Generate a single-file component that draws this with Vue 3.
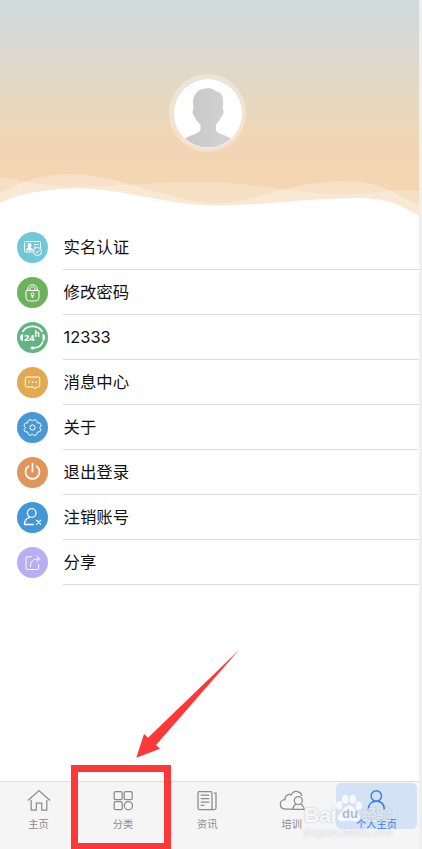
<template>
  <div class="page">
    <div class="screen">
      <header class="hero">
        <div class="avatar">
          <svg viewBox="0 0 68 69">
            <defs>
              <linearGradient id="person" x1="0" x2="1" y1="0" y2="0">
                <stop offset="0" stop-color="#c7c7c7" />
                <stop offset="1" stop-color="#d3d3d3" />
              </linearGradient>
            </defs>
            <path
              fill="url(#person)"
              d="M34 9.300C38.500 9.300 40.500 11 42 12.200C47 13 49.500 17 49.200 23.500L48.800 30.500C50.300 31.500 49.500 36.500 47.500 37.500C46 41 43.500 43.500 42 45.500V50.500C42 55 51 55.500 57 59.500A34 34 0 0 1 11 59.500C17 55.500 26.500 54.500 26.500 50.500V45.500C24.500 43.500 22 41 20.500 37.500C18.500 36.500 17.800 31.500 19.500 30.500L19 23.500C19 14.500 25 9.300 34 9.300Z"
            />
          </svg>
        </div>
        <svg class="waves" viewBox="0 0 419 60" preserveAspectRatio="none">
          <path fill="#fff" fill-opacity=".24" d="M0 12C25 16 45 21.500 75 21.500C125 21.500 150 17 200 17C255 17 300 29.500 345 29.500C375 29 385 24 419 26V60H0Z" />
          <path fill="#fff" fill-opacity=".28" d="M0 28C24 16 42 9 70 9C120 9 170 38 218 38C255 38 290 16 345 16C380 16 397 29 419 41V60H0Z" />
          <path fill="#fff" d="M0 38C20 28 48 23.500 80 23.500C125 23.500 165 40.500 218 40.500C260 40.500 310 33 360 33C388 33 404 42 419 51V60H0Z" />
        </svg>
      </header>

      <ul class="menu">
        <li v-for="item in items" :key="item.icon" class="row">
          <span class="badge" :class="item.icon">
            <svg viewBox="0 0 31 31">
              <g v-if="item.icon === 'identity'">
                <path d="M17 20H8.500Q7.500 20 7.500 19V10.500Q7.500 9.500 8.500 9.500H22.500Q23.500 9.500 23.500 10.500V16M17 12.500H21.500M17 15H19" />
                <path class="solid" d="M12.500 11C15 11 15 14.500 13.500 15.500L16 17V18.500H9V17L11.500 15.500C10 14.500 10 11 12.500 11Z" />
                <circle class="check" cx="20.500" cy="19.500" r="4" />
                <path d="M18.500 19.500L20 21L22.500 18" />
              </g>
              <g v-else-if="item.icon === 'password'">
                <path d="M9 13.500H22V20.500Q22 24 18.500 24H12.500Q9 24 9 20.500ZM10.800 13.500V12C10.800 6.200 20.200 6.200 20.200 12V13.500M13 13.500V12C13 9 18 9 18 12V13.500M15 18.500H16V20.500H15Z" />
                <circle cx="15.500" cy="17.300" r="1.500" />
              </g>
              <g v-else-if="item.icon === 'hotline'">
                <path class="headset" d="M5.500 10C9.500 2.500 21.500 2.500 25.500 10M26 19.500C24.500 23.500 21 26 16.500 26" />
                <path class="solid" d="M6 12C2.200 12 2.200 19 6 19ZM25.500 12C29.200 12 29.200 19 25.500 19Z" />
                <ellipse class="solid" cx="15.500" cy="26" rx="2" ry="1.400" />
                <text x="7" y="19">24</text>
                <text class="hour" x="17.600" y="15">h</text>
              </g>
              <g v-else-if="item.icon === 'message'">
                <path d="M9.500 10H21.500Q22.700 10 22.700 11.200V18.800Q22.700 20 21.500 20H19.500L18 22L16.500 20H9.500Q8.300 20 8.300 18.800V11.200Q8.300 10 9.500 10Z" />
                <path class="dots" d="M11.500 15H13M15 15H16.500M18.500 15H20" />
              </g>
              <g v-else-if="item.icon === 'about'">
                <path d="M13 7.500Q15.500 10 18 7.500Q20 7.800 20.500 11Q24 10.200 24 14Q21 15.500 24 17.500Q23.500 20.500 20.500 20Q20 23.500 18 23.500Q15.500 21 13 23.500Q11 23 10.500 20Q7 20.500 7 17.500Q10 15.500 7 14Q7.500 10.200 10.500 11Q10.500 8 13 7.500Z" />
                <circle cx="15.500" cy="15.500" r="2.600" />
              </g>
              <g v-else-if="item.icon === 'logout'" class="power">
                <path d="M11.500 9.200A7 7 0 1 0 19.500 9.200M15.500 6.500V14.500" />
              </g>
              <g v-else-if="item.icon === 'cancel'" class="medium">
                <circle cx="14.700" cy="11" r="4.300" />
                <path d="M12.800 15.300C8.500 16.300 7.500 19.300 7.500 22.500H17M19.300 18L24 22.600M24 18L19.300 22.600" />
              </g>
              <g v-else>
                <path d="M15 9.800H10Q9 9.800 9 10.800V21.500Q9 22.500 10 22.500H20.700Q21.700 22.500 21.700 21.500V17M13.500 20C13.500 14.500 15.500 11.800 22.500 11.800M19.500 8.800L22.700 11.800L19.500 15" />
              </g>
            </svg>
          </span>
          <span class="label">{{ item.label }}</span>
        </li>
      </ul>
    </div>

    <nav class="tabs">
      <div
        v-for="tab in tabs"
        :key="tab.icon"
        class="tab"
        :class="{ active: tab.icon === current }"
        @click="current = tab.icon"
      >
        <svg viewBox="0 0 26 24">
          <path v-if="tab.icon === 'home'" d="M2 12.500L13 2.500L24 12.500M5.200 12V22.200H10.300V15.200H15.700V22.200H20.800V12" />
          <g v-else-if="tab.icon === 'category'">
            <rect x="4.200" y="3.500" width="8" height="8" rx="1.300" />
            <rect x="14.200" y="3.500" width="8" height="8" rx="1.300" />
            <rect x="4.200" y="13.500" width="8" height="8" rx="1.300" />
            <circle cx="18.400" cy="17.700" r="4.100" />
          </g>
          <path v-else-if="tab.icon === 'news'" d="M5.200 3.500H16.500Q18 3.500 18 5V21.500H5.500Q4 21.500 4 20V5Q4 3.500 5.200 3.500ZM6.700 7H15.300M6.700 10.500H15.300M6.700 14H15.300M6.700 17.300H10.500M20 5H22V20Q22 21.500 20.500 21.500H18" />
          <g v-else-if="tab.icon === 'training'">
            <path d="M14 21H6.500C-.5 21 0 11.500 6 11.500C5.500 7.500 9.500 5.500 12 7C15 1.500 22 3 22.700 8" />
            <circle cx="19.300" cy="12.500" r="4" />
            <path d="M17 16C14.500 17.500 14 19 14 21.300H25C25 19 24.300 17.500 21.700 16" />
          </g>
          <g v-else>
            <circle cx="13.300" cy="8" r="5.200" />
            <path d="M5.300 21.600C5.300 16.200 8.300 13.200 13.300 13.200S21.300 16.200 21.300 21.600" />
          </g>
        </svg>
        <span>{{ tab.label }}</span>
      </div>
    </nav>

    <div class="edge"></div>

    <div class="watermark">
      <div class="brand">
        <span>Bai</span>
        <svg viewBox="0 0 30 32">
          <ellipse cx="4.500" cy="12" rx="3.300" ry="4.500" />
          <ellipse cx="11" cy="5.500" rx="3.500" ry="4.800" />
          <ellipse cx="19" cy="5.500" rx="3.500" ry="4.800" />
          <ellipse cx="25.500" cy="12.500" rx="3.300" ry="4.500" />
          <path d="M15 12C20 12 21 18 25 21C29 25 26 30 21 29C16 28 14 28 9 29C3 30 1 25 5 21C9 18 10 12 15 12Z" />
          <text x="7.500" y="26">du</text>
        </svg>
        <span class="cn">经验</span>
      </div>
      <div class="site">jingyan.baidu.com</div>
    </div>

    <div class="highlight"></div>
    <svg class="arrow" viewBox="0 0 120 120">
      <path d="M119 10L36 105L40 108.700L16.300 117.700L24 94L28 97.700Z" />
    </svg>
  </div>
</template>

<script setup>
import { ref } from 'vue'

const current = ref('mine')

const items = [
  { icon: 'identity', label: '实名认证' },
  { icon: 'password', label: '修改密码' },
  { icon: 'hotline', label: '12333' },
  { icon: 'message', label: '消息中心' },
  { icon: 'about', label: '关于' },
  { icon: 'logout', label: '退出登录' },
  { icon: 'cancel', label: '注销账号' },
  { icon: 'share', label: '分享' }
]

const tabs = [
  { icon: 'home', label: '主页' },
  { icon: 'category', label: '分类' },
  { icon: 'news', label: '资讯' },
  { icon: 'training', label: '培训' },
  { icon: 'mine', label: '个人主页' }
]
</script>

<style>
body {
  margin: 0;
  background: #fff;
}
</style>

<style scoped>
.page {
  position: relative;
  display: flex;
  flex-direction: column;
  width: 422px;
  height: 849px;
  overflow: hidden;
  background: #fff;
  color: #111;
  font-family: Inter, "Noto Sans CJK SC", sans-serif;
}

.screen {
  flex: 1;
  width: 419px;
}

.hero {
  position: relative;
  display: flex;
  justify-content: center;
  height: 225px;
  box-sizing: border-box;
  padding-top: 74px;
  background: linear-gradient(#cfdadd 0, #d2d9d9 18px, #d9d9d3 42px, #e1d8c9 70px, #e6d8c1 98px, #ead8bb 115px, #efd7b7 133px, #f2d5b4 152px, #f4d6b2 185px);
}

.avatar {
  width: 68px;
  height: 69px;
  margin-left: -4px;
  padding: 4.5px;
  border-radius: 50%;
  box-shadow: inset 0 0 0 5px rgba(255, 255, 255, 0.3);
}

.avatar svg {
  display: block;
  width: 68px;
  height: 69px;
  border-radius: 50%;
  background: #fff;
}

.waves {
  position: absolute;
  left: 0;
  bottom: 0;
  width: 100%;
  height: 60px;
}

.menu {
  margin: 0;
  padding: 0;
  list-style: none;
}

.row {
  display: flex;
  height: 44.95px;
  padding-left: 17px;
}

.badge {
  width: 31px;
  height: 31px;
  margin: 7.4px 15px 0 0;
  border-radius: 50%;
}

.badge svg {
  display: block;
  fill: none;
  stroke: #fff;
  stroke-width: 1;
  stroke-linejoin: round;
}

.badge .solid {
  fill: #fff;
  stroke: none;
}

.badge .check {
  fill: #70c7d6;
}

.badge .headset,
.badge .dots {
  stroke-width: 1.6;
}

.badge .medium {
  stroke-width: 1.3;
}

.badge .power {
  stroke-width: 1.7;
  stroke-linecap: round;
}

.badge text {
  fill: #fff;
  stroke: none;
  font: 700 9.3px "Open Sans", sans-serif;
}

.badge .hour {
  font-size: 8px;
}

.identity { background: #70c7d6; }
.password { background: #6bb35b; }
.hotline { background: #62b581; }
.message { background: #e3a950; }
.about { background: #4799d5; }
.logout { background: #df955c; }
.cancel { background: #4397d8; }
.share { background: #b8aef3; }

.label {
  flex: 1;
  border-bottom: 1px solid #dcdcdc;
  line-height: 45px;
  font-size: 16.4px;
  text-indent: 0.6px;
}

.tabs {
  display: flex;
  height: 67px;
  border-top: 1px solid #dedede;
  background: #f5f5f5;
}

.tab {
  flex: 0 0 84.4px;
  display: flex;
  flex-direction: column;
  align-items: center;
  height: 46px;
  margin-top: 1px;
  color: #8b8b8b;
  font-size: 10.2px;
  line-height: 14px;
}

.tab:first-child {
  margin-left: -3.7px;
}

.tab svg {
  flex: none;
  width: 26px;
  height: 24px;
  margin: 5px 0 4.5px;
  fill: none;
  stroke: currentColor;
  stroke-width: 1.25;
}

.tab.active {
  flex-basis: 81px;
  margin-left: 2.1px;
  border-radius: 5px;
  background: #d3e2f5;
  color: #347bf0;
}

.tab.active svg {
  stroke-width: 1.4;
}

.edge {
  position: absolute;
  top: 0;
  right: 0;
  width: 3px;
  height: 849px;
  background: #efefef;
}

.watermark {
  position: absolute;
  left: 304px;
  top: 794px;
  color: rgba(255, 255, 255, 0.9);
  font-family: "Liberation Sans", "Noto Sans CJK SC", sans-serif;
  text-shadow: 0 0 2px rgba(80, 90, 110, 0.4);
  pointer-events: none;
}

.brand {
  display: flex;
  align-items: flex-end;
  height: 32px;
  font-size: 21px;
  font-weight: 700;
  line-height: 22px;
}

.brand svg {
  width: 28px;
  height: 30px;
  margin: 0 -1px 2px -2px;
  fill: rgba(255, 255, 255, 0.8);
}

.brand text {
  fill: #a9bbd5;
  font-size: 14px;
  text-shadow: none;
}

.brand .cn {
  color: rgba(255, 255, 255, 0.6);
  font-size: 15px;
  text-shadow: 0 0 2px rgba(80, 90, 110, 0.3);
}

.site {
  color: rgba(255, 255, 255, 0.7);
  font-size: 11px;
  line-height: 12px;
  text-shadow: 0 0 2px rgba(80, 90, 110, 0.3);
}

.highlight {
  position: absolute;
  left: 71px;
  top: 765px;
  width: 86px;
  height: 71px;
  border: 7px solid #fd3838;
  border-bottom-width: 6px;
}

.arrow {
  position: absolute;
  left: 120px;
  top: 640px;
  width: 120px;
  height: 120px;
  fill: #fd3838;
}
</style>
